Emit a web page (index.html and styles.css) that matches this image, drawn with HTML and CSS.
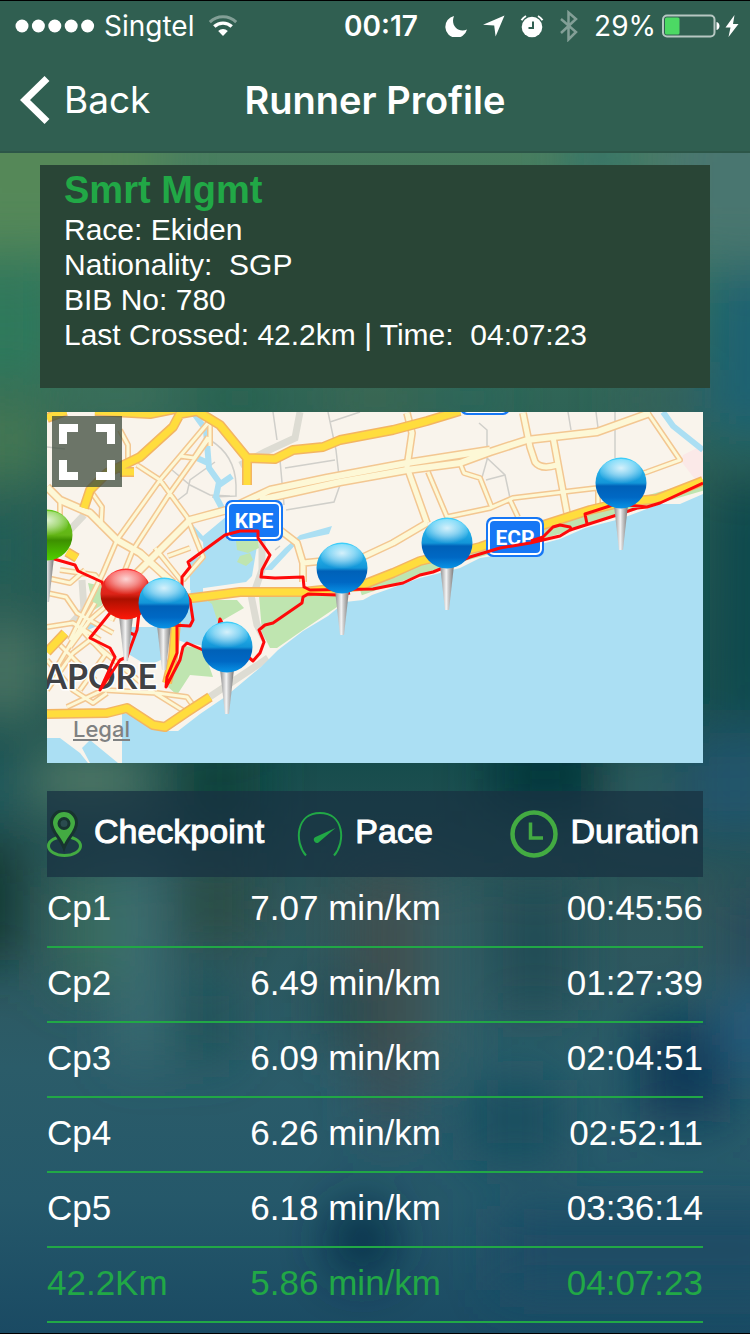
FILE: index.html
```html
<!DOCTYPE html>
<html lang="en">
<head>
<meta charset="utf-8">
<meta name="viewport" content="width=device-width, initial-scale=1">
<title>Runner Profile</title>
<link rel="stylesheet" href="styles.css">
</head>
<body>
<svg class="backdrop" viewBox="0 0 750 1334" preserveAspectRatio="none" aria-hidden="true">
  <defs>
    <linearGradient id="base" x1="0" y1="0" x2="0" y2="1">
      <stop offset="0.1" stop-color="#4c7f60"/><stop offset="0.2" stop-color="#35755a"/>
      <stop offset="0.3" stop-color="#2f6456"/><stop offset="0.57" stop-color="#164c4c"/>
      <stop offset="0.68" stop-color="#2f565a"/><stop offset="0.8" stop-color="#2b5c69"/>
      <stop offset="0.9" stop-color="#25586a"/><stop offset="1" stop-color="#1a4a63"/>
    </linearGradient>
    <filter id="soft" x="-50%" y="-50%" width="200%" height="200%"><feGaussianBlur stdDeviation="26"/></filter>
  </defs>
  <rect width="750" height="1334" fill="url(#base)"/>
  <g filter="url(#soft)">
    <rect x="-60" y="80" width="220" height="170" fill="#558858"/>
    <rect x="660" y="100" width="150" height="160" fill="#4a7670"/>
    <rect x="575" y="130" width="50" height="50" fill="#2a6e6e"/>
    <rect x="705" y="270" width="100" height="170" fill="#1b6272"/>
    <rect x="-60" y="270" width="120" height="110" fill="#2f795b"/>
    <rect x="60" y="385" width="110" height="22" fill="#4e8061"/>
    <rect x="200" y="385" width="80" height="26" fill="#226149"/>
    <rect x="330" y="385" width="90" height="26" fill="#466b50"/>
    <rect x="440" y="385" width="60" height="26" fill="#27695f"/>
    <rect x="620" y="385" width="80" height="30" fill="#3b615e"/>
    <rect x="-60" y="400" width="110" height="80" fill="#457853"/>
    <rect x="-60" y="510" width="100" height="80" fill="#215f57"/>
    <rect x="-50" y="620" width="100" height="100" fill="#477160"/>
    <rect x="710" y="480" width="90" height="240" fill="#10484e"/>
    <rect x="30" y="750" width="120" height="60" fill="#527a68"/>
    <rect x="-50" y="760" width="60" height="50" fill="#165d63"/>
    <rect x="180" y="740" width="80" height="100" fill="#0d433b"/>
    <rect x="490" y="740" width="110" height="70" fill="#04363a"/>
    <rect x="625" y="750" width="30" height="80" fill="#426a70"/>
    <rect x="680" y="730" width="110" height="110" fill="#21546c"/>
    <rect x="-60" y="840" width="80" height="120" fill="#0d3833"/>
    <rect x="60" y="870" width="60" height="120" fill="#386a5c"/>
    <rect x="120" y="860" width="40" height="200" fill="#3e7176"/>
    <rect x="180" y="870" width="70" height="70" fill="#2b4b43"/>
    <rect x="350" y="870" width="80" height="200" fill="#414f50"/>
    <rect x="430" y="880" width="30" height="200" fill="#33646b"/>
    <rect x="500" y="880" width="70" height="130" fill="#214b54"/>
    <rect x="730" y="890" width="60" height="90" fill="#284a5c"/>
    <rect x="180" y="980" width="50" height="80" fill="#1f5157"/>
    <rect x="320" y="980" width="50" height="60" fill="#22484f"/>
    <rect x="370" y="1050" width="40" height="80" fill="#3d4b53"/>
    <rect x="640" y="1020" width="90" height="100" fill="#0c3857"/>
    <rect x="470" y="1080" width="90" height="80" fill="#184d5e"/>
    <rect x="720" y="990" width="80" height="80" fill="#255c7c"/>
    <ellipse cx="362" cy="1240" rx="30" ry="36" fill="#032a43"/>
    <rect x="500" y="1210" width="300" height="80" fill="#1b4c65"/>
  </g>
</svg>

<header class="topbar">
  <div class="status">
    <div class="status-left">
      <svg width="80" height="14" viewBox="0 0 80 14" fill="#fff" aria-hidden="true"><circle cx="7" cy="7" r="6.5"/><circle cx="23.4" cy="7" r="6.5"/><circle cx="39.8" cy="7" r="6.5"/><circle cx="56.2" cy="7" r="6.5"/><circle cx="72.6" cy="7" r="6.5"/></svg>
      <span>Singtel</span>
      <svg class="wifi" width="30" height="22" viewBox="0 0 30 22" fill="none" stroke="#fff" aria-hidden="true"><path d="M1.8 7.2a19 19 0 0 1 26.4 0" stroke-width="3" opacity=".4"/><path d="M6.3 11.6a12.6 12.6 0 0 1 17.4 0" stroke-width="3.4"/><path d="M15 21l-4.8-5a7 7 0 0 1 9.6 0z" fill="#fff" stroke="none"/></svg>
    </div>
    <time class="clock">00:17</time>
    <div class="status-right">
      <svg width="23" height="22" viewBox="0 0 23 22" aria-hidden="true"><path d="M9 1A11 11 0 1 0 22 14.500C14 18.500 5 11 9 1z" fill="#fff"/></svg>
      <svg width="22" height="22" viewBox="0 0 22 22" aria-hidden="true"><path d="M21.500.5L0 9.800l11.200.8L12.600 21.500z" fill="#fff"/></svg>
      <svg width="24" height="24" viewBox="0 0 24 24" fill="none" stroke="#fff" aria-hidden="true"><circle cx="12" cy="13" r="10.300" fill="#fff" stroke="none"/><path d="M1.500 6.200A13 13 0 0 1 6 2M18 2a13 13 0 0 1 4.500 4.200" stroke-width="2"/><path d="M13 7.500V14H8.500" stroke="#305f51" stroke-width="2"/></svg>
      <svg width="20" height="32" viewBox="0 0 20 32" fill="none" stroke="#fff" stroke-width="2.500" opacity=".4" aria-hidden="true"><path d="M2 9l15 13-7.500 7.500v-27L17 9 2 23"/></svg>
      <span class="percent">29%</span>
      <svg width="58" height="24" viewBox="0 0 58 24" aria-hidden="true"><rect x="1" y="1.500" width="51.500" height="21" rx="4" fill="none" stroke="#fff" stroke-width="2" opacity=".65"/><rect x="3" y="3.500" width="14.500" height="17" rx="1.500" fill="#4cd964"/><path d="M54.500 8c4 1 4 7 0 8z" fill="#fff"/></svg>
      <svg width="14" height="24" viewBox="0 0 14 24" aria-hidden="true"><path d="M9.500 1L.5 13.500h5L3.500 23l10-13H8z" fill="#fff"/></svg>
    </div>
  </div>
  <nav class="nav">
    <button class="back" type="button">
      <svg width="30" height="50" viewBox="0 0 30 50" fill="none" stroke="#fff" stroke-width="7" aria-hidden="true"><path d="M27 3.500L5 25l22 21.500"/></svg>
      Back
    </button>
    <h1>Runner Profile</h1>
  </nav>
</header>

<main>
  <section class="card">
    <h2>Smrt Mgmt</h2>
    <p>Race: Ekiden</p>
    <p>Nationality:&nbsp; SGP</p>
    <p>BIB No: 780</p>
    <p>Last Crossed: 42.2km | Time:&nbsp; 04:07:23</p>
  </section>

  <section class="map" aria-label="Route map">
    <svg class="map-art" viewBox="47 412 656 351">
      <defs>
        <linearGradient id="blue" x1="0" y1="0" x2="0" y2="1"><stop offset="0" stop-color="#3fd0fb"/><stop offset=".5" stop-color="#1295d8"/><stop offset=".56" stop-color="#0061b8"/><stop offset=".78" stop-color="#0068c4"/><stop offset="1" stop-color="#0894e6"/></linearGradient>
        <radialGradient id="shine" cx=".5" cy=".35" r=".6"><stop offset="0" stop-color="#fff" stop-opacity=".8"/><stop offset=".5" stop-color="#fff" stop-opacity=".45"/><stop offset="1" stop-color="#fff" stop-opacity="0"/></radialGradient>
        <linearGradient id="red" x1="0" y1="0" x2="0" y2="1"><stop offset="0" stop-color="#f33"/><stop offset=".5" stop-color="#dc2418"/><stop offset=".6" stop-color="#ab1000"/><stop offset="1" stop-color="#ff1808"/></linearGradient>
        <linearGradient id="green" x1="0" y1="0" x2="0" y2="1"><stop offset="0" stop-color="#64c71c"/><stop offset=".5" stop-color="#63b515"/><stop offset=".6" stop-color="#3d8f00"/><stop offset="1" stop-color="#4fd000"/></linearGradient>
        <linearGradient id="steel"><stop offset="0" stop-color="#8c8c8c"/><stop offset=".45" stop-color="#f4f4f4"/><stop offset=".6" stop-color="#ccc"/><stop offset="1" stop-color="#777"/></linearGradient>
        <path id="needle" d="M-7 22H7L2 67H-2z" fill="url(#steel)"/>
        <ellipse id="gloss" cy="-11" rx="21" ry="13" fill="url(#shine)"/>
        <g id="pin"><use href="#needle"/><circle r="25.500" fill="url(#blue)"/><use href="#gloss"/></g>
        <path id="wide" d="M47 487L60 500 90 513 117 540 140 553 173 583M110 620L130 580 150 560 190 520 227 510 270 490L327 478 407 463 490 450M260 500L340 482 407 470 460 463 490 452 527 440 597 432 650 413"/>
        <path id="mid" d="M407 413L412 433 407 467 427 523M280 530L297 543 303 563V582M303 563L363 557 393 543 427 523M523 413L530 447 535 462Q541 470 557 465M553 437L567 513"/>
        <path id="thin" d="M208 423L160 480 117 540 103 573 70 640M210 437L170 493 133 550 117 590M137 465L160 480 187 517 203 557 183 580M180 456L194 458 208 437M428 472L447 517 490 508 513 498 563 492 597 488 647 472 680 460 648 413M460 463L464 473 480 478 492 508M510 500L518 517M598 488V505M190 548L168 556M90 490L102 507 101 527M120 430L128 445V459M210 423V446M155 548L183 583M60 500V520M47 593L66 597 77 613 113 633M47 627L73 623 100 640M70 647L90 620 113 600M47 660L73 690 93 703 107 693M47 690L73 653 90 640 150 690 187 713M67 707L103 690 157 693 187 697 195 708M77 625L105 655 80 690M95 603L55 670M55 640L95 680M60 570L95 575 108 590M47 578L70 583 85 570"/>
        <path id="major" d="M84 508L90 490 107 473 140 457 173 427 180 414 197 411 220 425 247 458 275 459 293 450 323 447 340 440 393 430 427 421 460 411M247 458V485M47 418L66 411M95 411L150 414 175 409M47 714L107 713 127 708 153 725 165 727 187 712 210 697M177 610L173 657 167 683M47 652L65 633M67 552L77 558M120 472H134M177 600L240 592H303L360 586 393 573 420 561 480 547 537 527 590 510 623 502 657 499 703 481"/>
      </defs>
      <rect x="47" y="412" width="656" height="351" fill="#f9f4ec"/>
      <g fill="none" stroke="#dddcd3" stroke-width="7"><path d="M300 412L295 438 265 452 240 465M84 515L65 535M262 540V570L255 590M82 580L84 610 70 625M250 590L257 625 265 640M268 658L205 700"/></g>
      <g fill="none" stroke="#d0cfca" stroke-width="1.500"><path d="M273 412L277 440M328 412L336 450 340 485 334 502 286 510M280 460L284 505M285 468L335 460M330 422L360 412M479 423L487 430V460L481 481M487 458L505 475 510 498M568 412L571 430M596 412L598 428M615 412V458M172 470L190 485 210 495 230 496M178 500L187 493 190 480 215 462M47 447L65 449M210 440Q235 455 236 485V496L212 497M505 475L486 480M280 546L275 550"/></g>
      <g fill="#bfe5b0"><path d="M183 646L203 648 213 677 190 675 177 695 168 687zM207 600L237 600 244 608 218 623zM259 596L350 593 337 607 303 630 277 648 270 648 262 632zM88 583L102 586V605L94 610z"/><path d="M360 590L420 569 447 560 510 543 560 528 620 509 703 485" fill="none" stroke="#bfe5b0" stroke-width="11"/></g>
      <path d="M683 455L703 445V481L694 478 681 461z" fill="#fbe9e8"/>
      <g fill="#abdff3">
        <path d="M703 494L680 504 660 504 620 519 585 528 560 539 500 555 480 558 460 568 420 578 372 595 363 600 345 602 328 616 303 631 278 650 262 666 225 697 200 714 178 731 160 731 148 716 122 713V763H703z"/>
        <path d="M47 738H60L80 753 88 763H47zM82 748L90 740 118 763H90zM193 525L203 536 227 516V540L258 540 252 576 246 582 190 590V560L204 555 203 542 193 532zM191 585H203V598L212 604 218 623 205 646 186 643 178 640 180 600H190zM130 627H163L165 658 148 666 130 655zM84 612L97 626 88 630zM264 570L285 548 300 535 332 526 329 534 300 540 272 570z"/>
        <path d="M193 412L206 430 209 468 219 482 216 497 223 510M197 458L208 463M219 485L232 476M663 412L673 426 703 450" fill="none" stroke="#abdff3" stroke-width="6"/>
      </g>
      <path d="M236 541L258 540 259 548 248 553 237 550zM240 556L250 553 253 560 246 566 237 562z" fill="#bfe5b0"/>
      <g class="road casing"><use href="#wide" stroke-width="9"/><use href="#mid" stroke-width="8"/><use href="#thin" stroke-width="6"/></g>
      <g class="road"><use href="#wide" stroke-width="6"/><use href="#mid" stroke-width="5"/><use href="#thin" stroke-width="3"/></g>
      <use href="#major" class="road highway-edge" stroke-width="10"/>
      <use href="#major" class="road highway" stroke-width="7"/>
      <text class="place" x="157" y="689" text-anchor="end">APORE</text>
      <g fill="#1677f5"><rect x="225" y="500" width="58" height="41" rx="7"/><rect x="486" y="517" width="58" height="40" rx="7"/><rect x="460" y="380" width="50" height="35" rx="7"/></g>
      <g fill="none" stroke="#fff" stroke-width="2"><rect x="228" y="503" width="52" height="35" rx="5"/><rect x="489" y="520" width="52" height="34" rx="5"/><rect x="463" y="383" width="44" height="29" rx="5"/></g>
      <g class="shield"><text x="254" y="528">KPE</text><text x="515" y="545">ECP</text></g>
      <path fill="none" stroke="#fe0a0a" stroke-width="3" stroke-linejoin="round" d="M47 557L75 565 78 571 102 582 106 594M110 613L90 638 110 648 115 657 100 690 120 660 127 657 137 630 139 613M130 633L135 635M177 620V653L167 677 166 687 180 660 183 647 187 643 203 650 215 652M173 625L190 626 193 620 190 600 182 587V577L190 567 188 562 225 535 240 531H258V538L270 555 262 570 261 577 275 578 303 577 304 587 310 590 373 589 403 583 420 575 433 572 470 557 500 548 530 543 560 536 570 530 617 515 637 508 647 507 660 503 703 483M531 541L543 537 553 527 560 525 570 527 572 531M587 524L585 514 613 505 627 505 647 507M350 593L337 595 308 594 303 597 302 603 273 623 265 625 259 630 264 642 260 653 253 661 246 655M219 625L220 619 223 625"/>
      <g transform="translate(47 535)"><use href="#needle"/><circle r="25.500" fill="url(#green)"/><use href="#gloss"/></g>
      <g transform="translate(126 594)"><use href="#needle"/><circle r="25.500" fill="url(#red)"/><use href="#gloss"/></g>
      <use href="#pin" x="164" y="603"/><use href="#pin" x="227" y="647"/><use href="#pin" x="342" y="568"/><use href="#pin" x="447" y="543"/><use href="#pin" x="621" y="483"/>
    </svg>
    <button class="expand" type="button" aria-label="Full screen">
      <svg width="56" height="56" viewBox="0 0 56 56" fill="none" stroke="#fff" stroke-width="8" aria-hidden="true"><path d="M4 20V4H19M37 4H52V20M4 36V52H19M37 52H52V36"/></svg>
    </button>
    <a class="legal" href="#legal">Legal</a>
  </section>

  <table class="splits">
    <thead>
      <tr>
        <th scope="col"><span class="label">
          <svg width="35" height="48" viewBox="0 0 35 48" aria-hidden="true"><ellipse cx="17.500" cy="36" rx="16" ry="9.500" fill="none" stroke="#43ab42" stroke-width="3"/><path d="M17 38C13 27 4.500 22 4.500 13a12.500 12.500 0 0 1 25 0c0 9-8.500 14-12.500 25z" fill="#43ab42" stroke="#17332f" stroke-width="3"/><circle cx="17" cy="13.500" r="5" fill="#2a4b4e" stroke="#17332f" stroke-width="3"/></svg>
          Checkpoint</span></th>
        <th scope="col" class="pace"><span class="label">
          <svg width="46" height="46" viewBox="0 0 46 46" aria-hidden="true"><path d="M9 44.500C-3 31-1 2 23 2S49 31 37 44.500" fill="none" stroke="#21a846" stroke-width="2"/><path d="M38.500 17L18.500 26a3 3 0 0 0 3 5.500z" fill="#21a846"/></svg>
          Pace</span></th>
        <th scope="col" class="duration"><span class="label">
          <svg width="48" height="48" viewBox="0 0 48 48" fill="none" stroke="#43ab42" aria-hidden="true"><circle cx="24" cy="24" r="21.500" stroke-width="4.500"/><path d="M20.500 12.500V28H33" stroke-width="3.500"/></svg>
          Duration</span></th>
      </tr>
    </thead>
    <tbody>
      <tr><td>Cp1</td><td>7.07 min/km</td><td>00:45:56</td></tr>
      <tr><td>Cp2</td><td>6.49 min/km</td><td>01:27:39</td></tr>
      <tr><td>Cp3</td><td>6.09 min/km</td><td>02:04:51</td></tr>
      <tr><td>Cp4</td><td>6.26 min/km</td><td>02:52:11</td></tr>
      <tr><td>Cp5</td><td>6.18 min/km</td><td>03:36:14</td></tr>
      <tr class="finish"><td>42.2Km</td><td>5.86 min/km</td><td>04:07:23</td></tr>
    </tbody>
  </table>
</main>
</body>
</html>
```
FILE: styles.css
```css
* { box-sizing: border-box; }

body {
  margin: 0;
  min-height: 100vh;
  color: #fff;
  background: #1a4a63;
  border-bottom: 1px solid #000;
  font-family: "Liberation Sans", Arial, sans-serif;
}

h1, h2, p { margin: 0; }

svg { display: block; flex: none; }

.backdrop {
  position: absolute;
  inset: 0;
  z-index: -1;
  width: 100%;
  height: 100%;
}

.topbar {
  background: #305f51;
  border-top: 1px solid #000;
  border-bottom: 2px solid #2c5648;
  font-family: Inter, sans-serif;
}

.status {
  display: grid;
  grid-template-columns: 1fr auto 1fr;
  align-items: center;
  height: 49px;
  padding: 0 3px 0 15px;
  font-size: 28px;
}

.status-left,
.status-right {
  display: flex;
  align-items: center;
  gap: 9px;
}

.status-left .wifi { margin-left: 5px; }

.clock {
  font-weight: 600;
}

.status-right {
  justify-content: flex-end;
  gap: 15px;
  padding-right: 8px;
}

.percent { margin-right: -9px; }

.status-right svg:last-child { margin-left: -10px; }

.nav {
  display: grid;
  grid-template-columns: 1fr auto 1fr;
  align-items: center;
  height: 101px;
  padding: 0 20px 2px;
}

.back {
  display: flex;
  align-items: center;
  justify-self: start;
  gap: 14px;
  padding: 0;
  border: 0;
  background: none;
  color: inherit;
  font: inherit;
  font-size: 37px;
}

.nav h1 {
  font-size: 38px;
  font-weight: 600;
}

main { padding: 12px 40px 9px; }

.card {
  min-height: 223px;
  padding: 4px 24px;
  background: #294536;
  font-size: 30px;
  line-height: 35px;
}

.card h2 {
  color: #21a846;
  font-size: 38px;
  line-height: 43px;
}

.map {
  position: relative;
  margin: 24px 7px 28px;
}

.map-art { width: 100%; }

.road {
  fill: none;
  stroke: #fdf8d6;
  stroke-linejoin: round;
}

.casing { stroke: #f3c792; }
.highway-edge { stroke: #f3b562; }
.highway { stroke: #ffdd3d; }

.place {
  fill: #3f4145;
  stroke: #fff;
  stroke-width: 3px;
  paint-order: stroke;
  font: 700 34px Lato, sans-serif;
}

.shield {
  fill: #fff;
  text-anchor: middle;
  font: 700 21px Roboto, sans-serif;
}

.expand {
  position: absolute;
  top: 4px;
  left: 5px;
  display: grid;
  place-items: center;
  width: 70px;
  height: 71px;
  padding: 0;
  border: 0;
  background: rgb(60 75 60 / 75%);
}

.legal {
  position: absolute;
  bottom: 20px;
  left: 26px;
  color: #7f8181;
  font: 500 22px/28px Inter, sans-serif;
}

.splits {
  width: calc(100% - 14px);
  margin: 0 7px;
  border-collapse: separate;
  border-spacing: 0;
  table-layout: fixed;
  font-size: 35px;
  line-height: 40px;
  white-space: nowrap;
}

.splits th {
  height: 86px;
  padding: 0;
  background: rgb(24 50 66 / 75%);
  font-size: 34px;
  font-weight: 400;
  text-align: left;
  -webkit-text-stroke: 1px #fff;
}

.splits th:first-child { width: 31%; }
.splits th:last-child { width: 30%; }

.label {
  position: relative;
  display: flex;
  align-items: center;
  gap: 12px;
  padding-bottom: 6px;
}

.label svg { margin-top: 6px; }

.splits .pace { padding-left: 47px; }

.duration .label {
  justify-content: flex-end;
  padding-right: 4px;
}

.splits td {
  height: 75px;
  padding: 0 0 18px;
  border-bottom: 2px solid #21a846;
  vertical-align: bottom;
}

.splits tbody tr:first-child td { height: 71px; }

.splits td:last-child { text-align: right; }

.finish { color: #21a846; }
```
